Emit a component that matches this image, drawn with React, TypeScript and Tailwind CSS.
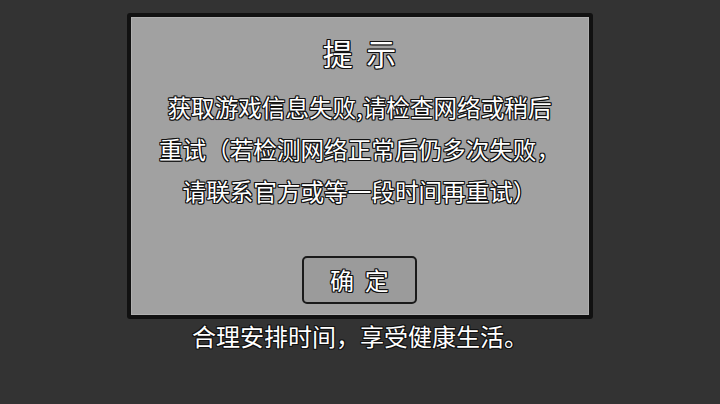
const outline =
  '[text-shadow:-1px_0_#111,1px_0_#111,0_-1px_#111,0_1px_#111,-1px_-1px_#111,1px_1px_#111,-1px_1px_#111,1px_-1px_#111]'

const lines = [
  '获取游戏信息失败,请检查网络或稍后',
  '重试（若检测网络正常后仍多次失败，',
  '请联系官方或等一段时间再重试）',
]

export default function App() {
  return (
    <div
      className="h-[404px] w-[720px] bg-[#333333] flex flex-col items-center overflow-hidden"
      style={{ fontFamily: '"Noto Sans CJK SC", "Noto Sans", sans-serif' }}
    >
      {/* dialog */}
      <div className="mt-[13px] ml-[-1px] w-[466px] h-[306px] border-4 border-[#111111] rounded-[3px] bg-[#a1a1a1] flex flex-col items-center shadow-[inset_0_0_0_1px_#b0b0b0]">
        <div className={`mt-[15px] h-[40px] leading-[40px] text-[30px] text-white whitespace-pre ${outline}`}>
          提  示
        </div>
        <div className="mt-[14px] flex flex-col items-center">
          {lines.map((l) => (
            <div key={l} className={`h-[42px] leading-[42px] text-[23.6px] text-white whitespace-nowrap ${outline}`}>
              {l}
            </div>
          ))}
        </div>
        <button className="mt-[44px] w-[115px] h-[48px] rounded-[5px] border-2 border-[#1a1a1a] bg-[#9b9b9b] flex items-center justify-center">
          <span className={`text-[24px] text-white leading-none whitespace-pre ${outline}`}>确  定</span>
        </button>
      </div>
      <div className={`mt-0 h-[34px] leading-[34px] text-[24px] text-white ${outline}`}>
        合理安排时间，享受健康生活。
      </div>
    </div>
  )
}
